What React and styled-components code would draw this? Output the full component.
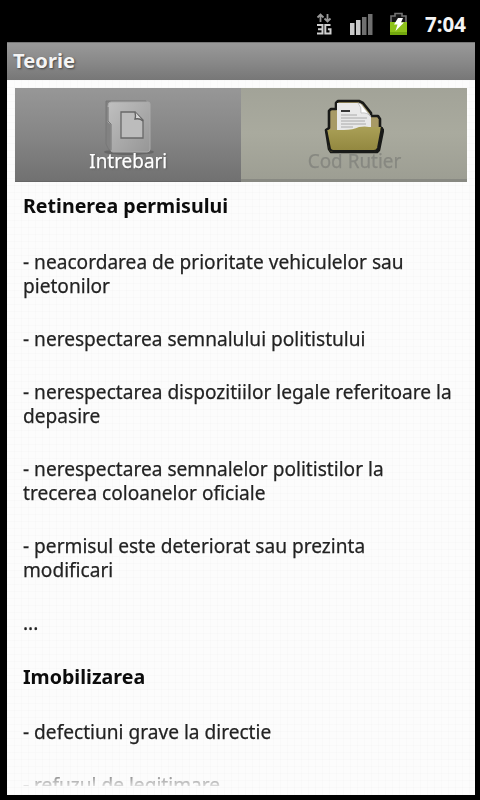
import React from 'react';
import styled, { createGlobalStyle } from 'styled-components';

const GlobalStyle = createGlobalStyle`
  * {
    box-sizing: border-box;
  }

  body {
    margin: 0;
    background: #000;
    font-family: 'Noto Sans', 'Open Sans', sans-serif;
  }
`;

const Screen = styled.div`
  width: 480px;
  height: 800px;
  padding: 0 5px 5px 7px;
  background: #000;
  display: flex;
  flex-direction: column;
  overflow: hidden;
`;

const StatusBar = styled.header`
  flex: none;
  height: 42px;
  padding: 6px 8px 0 0;
  display: flex;
  align-items: center;
  justify-content: flex-end;

  svg {
    display: block;
  }
`;

const StatusIcons = styled.div`
  display: flex;
  align-items: center;
  gap: 17px;
  margin-right: 18px;
`;

const Clock = styled.span`
  width: 42px;
  color: #f4f4f4;
  font-size: 20.5px;
  line-height: 24px;
  font-weight: 700;
  white-space: nowrap;
`;

const TitleBar = styled.h1`
  flex: none;
  height: 38px;
  margin: 0;
  padding: 0 6px;
  background: linear-gradient(#999, #898989 50%, #777);
  border-top: 1px solid #777;
  color: #f4f4f4;
  font-size: 20.2px;
  font-weight: 700;
  line-height: 35px;
  text-shadow: 1px 1px 2px #444;
`;

const Page = styled.main`
  flex: 1;
  min-height: 0;
  padding: 8px 8px 9px;
  display: flex;
  flex-direction: column;
  background-color: #fcfcfc;
  background-image:
    repeating-linear-gradient(90deg, rgba(0, 0, 0, 0.012) 0 1px, transparent 1px 7px),
    repeating-linear-gradient(rgba(0, 0, 0, 0.012) 0 1px, transparent 1px 7px);
`;

const Tabs = styled.nav`
  flex: none;
  height: 94px;
  display: grid;
  grid-template-columns: 1fr 1fr;
`;

const Tab = styled.div`
  display: flex;
  flex-direction: column;
  align-items: center;
  padding-top: 10px;
  background: ${({ $active }) =>
    $active ? 'linear-gradient(#979797, #868686 50%, #717171)' : 'linear-gradient(#a2a398, #a9aa9e 50%, #9d9e93)'};
  border-bottom: ${({ $active }) => ($active ? '1px solid #666' : '3px solid #888982')};
  color: ${({ $active }) => ($active ? '#fff' : '#878881')};
  text-shadow: ${({ $active }) => ($active ? '1px 1px 2px #555' : 'none')};

  svg {
    display: block;
  }
`;

const TabLabel = styled.span`
  margin-top: -7px;
  font-size: 20px;
  line-height: 24px;
  transform: scaleX(0.945);
  -webkit-text-stroke: 0.25px currentColor;
`;

const Article = styled.article`
  flex: 1;
  min-height: 0;
  padding: 12px 0 0 8px;
  overflow: hidden;
  color: #222;
  mask-image: linear-gradient(#000 calc(100% - 24px), rgba(0, 0, 0, 0.15));
`;

const Heading = styled.h2`
  width: max-content;
  margin: 0 0 31.5px;
  color: #0c0c0c;
  font-size: 20px;
  font-weight: 700;
  line-height: 24px;
  transform: scaleX(0.98);
  transform-origin: left;
`;

const Paragraph = styled.p`
  margin: 0 0 29.2px;
  font-size: 20px;
  line-height: 24px;
`;

// slightly condensed, like the system face
const Line = styled.span`
  display: block;
  width: max-content;
  white-space: nowrap;
  transform: scaleX(0.955);
  transform-origin: left;
  -webkit-text-stroke: 0.25px currentColor;
`;

const NetworkIcon = () => (
  <svg width="16" height="22" viewBox="0 0 16 22">
    <path d="M4.5 9V2M1.5 4.5 4.5 1.5l3 3M11.5 1v7M8.5 5.5l3 3 3-3" fill="none" stroke="#999" strokeWidth="1.8" />
    <path d="M1 12h5.5v8.5H1M2 16.2h4.5M14.5 12H9.3v8.5h5.2v-4.3h-2.6" fill="none" stroke="#d0d0d0" strokeWidth="2" />
  </svg>
);

const SignalIcon = () => (
  <svg width="24" height="22" viewBox="0 0 24 22">
    <path d="M1 10h4.5v12H1zM7 7h4.5v15H7z" fill="#c9c9c9" />
    <path d="M13 4h4.5v18H13zM19 1h4.5v21H19z" fill="#707070" />
  </svg>
);

const BatteryIcon = () => (
  <svg width="17" height="24" viewBox="0 0 17 24">
    <path d="M1 10V4h4V1.5h7V4h4v6" fill="#161616" stroke="#747474" strokeWidth="1.6" />
    <path d="M0 10h17v13H0z" fill="#8fc31b" />
    <path d="M0 20h17v3H0z" fill="#73a80e" />
    <path d="M8 6h5l-2 4.5h3L5.5 19l2-6.5H4z" fill="#fff" />
  </svg>
);

const BookIcon = () => (
  <svg width="54" height="58" viewBox="0 0 54 58">
    <defs>
      <linearGradient id="cover" x2="1" y2="1">
        <stop stopColor="#c0c0c0" />
        <stop offset="1" stopColor="#969696" />
      </linearGradient>
    </defs>
    <ellipse cx="28" cy="54" rx="25" ry="3" fill="#505050" opacity="0.5" />
    <path d="M5 3h40v49H8l-3-6z" fill="#828282" stroke="#777" />
    <path d="M10 4h37q2 0 2 2v45q0 3-3 3H12q-2 0-2-2V26l-3-2V8q0-4 3-4z" fill="url(#cover)" stroke="#aaa" />
    <path d="M7 9v14l3 3v26" fill="none" stroke="#777" />
    <path d="M20 14h14l8 8v18H20z" fill="#bcbcbc" stroke="#686868" strokeWidth="1.3" />
    <path d="M34 14q1 4 0 7 5-1 8 2" fill="#d8d8d8" stroke="#606060" strokeWidth="1.3" />
  </svg>
);

const FolderIcon = () => (
  <svg width="60" height="58" viewBox="0 0 60 58">
    <defs>
      <linearGradient id="pocket" x2="0" y2="1">
        <stop stopColor="#aaa057" />
        <stop offset="1" stopColor="#91863e" />
      </linearGradient>
    </defs>
    <path
      d="M5 30V13l2-2h5V5l2-2h21l4 2 8 10v3h7l2 3v8l3 3-4 20-2 2H7l-2-3L2 32z"
      fill="#a89a65"
      stroke="#191a18"
      strokeWidth="2.6"
      strokeLinejoin="round"
    />
    <path d="M13 5h22l12 13v14H13z" fill="#e8e8e8" />
    <path d="M34 5q4 4 3 10 7-1 10 4L37 6z" fill="#fff" stroke="#aaa" strokeWidth="0.6" />
    <path d="M17 13h9" stroke="#222" strokeWidth="1.8" />
    <path d="M17 17h16M17 20h26M17 23h24M17 26h25M17 29h12" stroke="#999" strokeWidth="0.8" />
    <path
      d="M3 32h17q9 0 15-3 6-1 10 0h12l-4 22q-1 3-4 3H8q-2 0-3-3z"
      fill="url(#pocket)"
    />
    <path d="M2 31l4 20q1 2 3 2h41q3 0 4-3l4-21" fill="none" stroke="#191a18" strokeWidth="2" />
  </svg>
);

const offences = [
  ['- neacordarea de prioritate vehiculelor sau', 'pietonilor'],
  ['- nerespectarea semnalului politistului'],
  ['- nerespectarea dispozitiilor legale referitoare la', 'depasire'],
  ['- nerespectarea semnalelor politistilor la', 'trecerea coloanelor oficiale'],
  ['- permisul este deteriorat sau prezinta', 'modificari'],
  ['...'],
];

const immobilization = [
  ['- defectiuni grave la directie'],
  ['- refuzul de legitimare'],
];

const Rules = ({ items }) =>
  items.map((lines) => (
    <Paragraph key={lines[0]}>
      {lines.map((text) => (
        <Line key={text}>{text}</Line>
      ))}
    </Paragraph>
  ));

const App = () => {
  return (
    <>
      <GlobalStyle />
      <Screen>
        <StatusBar>
          <StatusIcons>
            <NetworkIcon />
            <SignalIcon />
            <BatteryIcon />
          </StatusIcons>
          <Clock>7:04</Clock>
        </StatusBar>
        <TitleBar>Teorie</TitleBar>
        <Page>
          <Tabs>
            <Tab $active>
              <BookIcon />
              <TabLabel>Intrebari</TabLabel>
            </Tab>
            <Tab>
              <FolderIcon />
              <TabLabel>Cod Rutier</TabLabel>
            </Tab>
          </Tabs>
          <Article>
            <Heading>Retinerea permisului</Heading>
            <Rules items={offences} />
            <Heading>Imobilizarea</Heading>
            <Rules items={immobilization} />
          </Article>
        </Page>
      </Screen>
    </>
  );
};

export default App;
